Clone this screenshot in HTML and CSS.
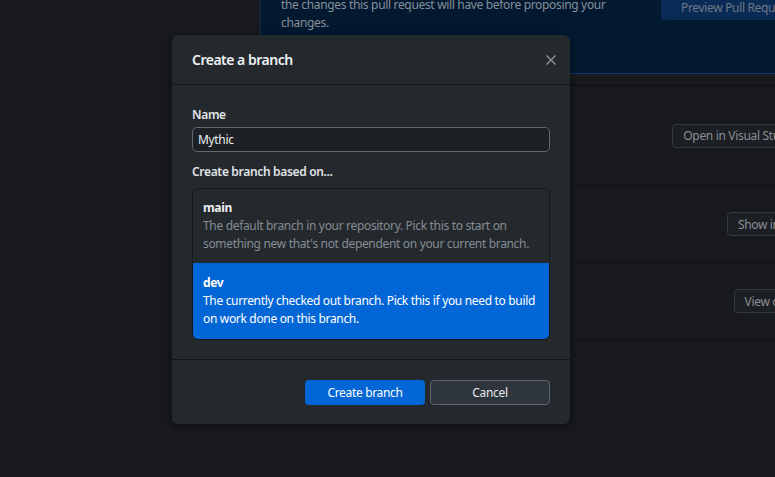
FILE: index.html
```html
<!DOCTYPE html>
<html lang="en">
<head>
<meta charset="utf-8">
<title>Create a branch</title>
<link rel="stylesheet" href="styles.css">
</head>
<body>
<div class="app">
  <aside class="sidebar"></aside>
  <main class="content">
    <div class="callout">
      <p class="callout-text">the changes this pull request will have before proposing your<br>changes.</p>
      <button class="callout-btn">Preview Pull Request</button>
    </div>
    <div class="actions">
      <div class="action action-first"><button class="ghost-btn">Open in Visual Studio Code</button></div>
      <div class="action"><button class="ghost-btn">Show in Explorer</button></div>
      <div class="action"><button class="ghost-btn">View on GitHub</button></div>
    </div>
  </main>
</div>

<div class="dialog">
  <header class="dialog-header">
    <h1 class="dialog-title">Create a branch</h1>
    <button class="close-btn" aria-label="Close">
      <svg width="10" height="10" viewBox="0 0 10 10"><path d="M0.5 0.5 L9.5 9.5 M9.5 0.5 L0.5 9.5" stroke="#8d949b" stroke-width="1.4" fill="none"/></svg>
    </button>
  </header>
  <div class="dialog-body">
    <label class="field-label">Name</label>
    <div class="text-input">Mythic</div>
    <div class="field-label field-label-gap">Create branch based on...</div>
    <div class="branch-list">
      <div class="branch-item">
        <div class="branch-name">main</div>
        <div class="branch-desc">The default branch in your repository. Pick this to start on something new that's not dependent on your current branch.</div>
      </div>
      <div class="branch-item branch-item-selected">
        <div class="branch-name">dev</div>
        <div class="branch-desc">The currently checked out branch. Pick this if you need to build on work done on this branch.</div>
      </div>
    </div>
  </div>
  <footer class="dialog-footer">
    <button class="btn btn-primary">Create branch</button>
    <button class="btn btn-secondary">Cancel</button>
  </footer>
</div>
</body>
</html>
```

FILE: styles.css
```css
html, body {
  margin: 0;
  padding: 0;
}
body {
  width: 775px;
  height: 477px;
  overflow: hidden;
  position: relative;
  background: #181a1d;
  font-family: "Noto Sans", "Segoe UI", "Open Sans", sans-serif;
  font-size: 12px;
  letter-spacing: -0.33px;
}
button {
  font-family: inherit;
  font-size: 12px;
  letter-spacing: -0.33px;
}

.app {
  display: grid;
  grid-template-columns: 260px 598px;
  height: 477px;
}
.sidebar {
  background: #181a1d;
}
.content {
  background: #181a1d;
}

.callout {
  height: 73px;
  background: #021930;
  border-left: 1px solid #0b2d55;
  border-bottom: 1px solid #0b3a6e;
  display: grid;
  grid-template-columns: 400px auto;
  overflow: hidden;
}
.callout-text {
  margin: -4px 0 0 20px;
  line-height: 18px;
  color: #878f98;
}
.callout-btn {
  align-self: start;
  justify-self: start;
  margin-top: -6px;
  height: 26px;
  padding: 0 20px;
  border: none;
  border-radius: 4px;
  background: #0a2b55;
  color: #6d7987;
  white-space: nowrap;
}

.actions {
  margin-top: 11px;
  margin-left: 20px;
}
.action {
  height: 76px;
  border-top: 1px solid #0f1113;
  display: flex;
  justify-content: flex-end;
  align-items: center;
  padding-right: 20px;
}
.action-first {
  height: 99px;
}
.action:last-child {
  border-bottom: 1px solid #0f1113;
}
.ghost-btn {
  height: 24px;
  padding: 0 10px;
  background: #1c1f23;
  border: 1px solid #353a40;
  border-radius: 4px;
  color: #8a9098;
  white-space: nowrap;
}

.dialog {
  position: absolute;
  left: 172px;
  top: 35px;
  width: 398px;
  background: #24292e;
  border-radius: 6px;
  box-shadow: 0 2px 10px rgba(0, 0, 0, 0.55);
  overflow: hidden;
}
.dialog-header {
  height: 49px;
  display: flex;
  align-items: center;
  justify-content: space-between;
  padding: 0 14px 0 20px;
  border-bottom: 1px solid #131619;
}
.dialog-title {
  margin: 0;
  font-size: 14px;
  font-weight: 600;
  letter-spacing: -0.5px;
  color: #eef0f2;
}
.close-btn {
  display: flex;
  padding: 0;
  border: none;
  background: none;
}

.dialog-body {
  padding: 21px 20px 19px;
  display: flex;
  flex-direction: column;
}
.field-label {
  line-height: 18px;
  font-weight: 600;
  color: #e1e4e8;
}
.field-label-gap {
  margin-top: 11px;
}
.text-input {
  margin-top: 3px;
  height: 25px;
  box-sizing: border-box;
  padding: 0 5px;
  display: flex;
  align-items: center;
  background: #1d2125;
  border: 1px solid #646a71;
  border-radius: 5px;
  color: #eceef0;
}
.branch-list {
  margin-top: 7px;
  border: 1px solid #16191c;
  border-radius: 6px;
  overflow: hidden;
  background: #24292e;
}
.branch-item {
  padding: 10px 10px 10px;
  line-height: 18px;
}
.branch-item-selected {
  background: #0366d6;
  padding: 11px 10px 11px;
}
.branch-name {
  font-weight: 700;
  color: #eceef0;
}
.branch-desc {
  color: #858c94;
}
.branch-item-selected .branch-name,
.branch-item-selected .branch-desc {
  color: #ffffff;
}

.dialog-footer {
  border-top: 1px solid #131619;
  padding: 20px 20px 19px;
  display: flex;
  justify-content: flex-end;
  gap: 5px;
}
.btn {
  width: 120px;
  height: 25px;
  box-sizing: border-box;
  border-radius: 4px;
  padding: 0;
}
.btn-primary {
  background: #0366d6;
  color: #ffffff;
  border: none;
}
.btn-secondary {
  background: #2f353c;
  color: #e6e8eb;
  border: 1px solid #5d646c;
}
```
